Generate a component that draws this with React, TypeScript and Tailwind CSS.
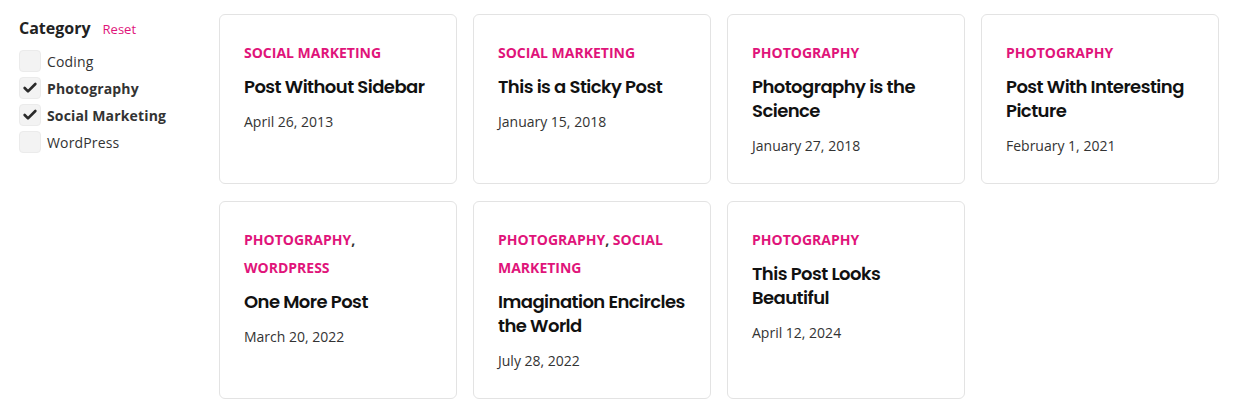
import { Check } from 'lucide-react';

interface Post {
  cats: string[];
  title: string;
  date: string;
}

const CATEGORIES = [
  { name: 'Coding', checked: false },
  { name: 'Photography', checked: true },
  { name: 'Social Marketing', checked: true },
  { name: 'WordPress', checked: false },
];

const POSTS: Post[] = [
  { cats: ['Social Marketing'], title: 'Post Without Sidebar', date: 'April 26, 2013' },
  { cats: ['Social Marketing'], title: 'This is a Sticky Post', date: 'January 15, 2018' },
  { cats: ['Photography'], title: 'Photography is the Science', date: 'January 27, 2018' },
  { cats: ['Photography'], title: 'Post With Interesting Picture', date: 'February 1, 2021' },
  { cats: ['Photography', 'WordPress'], title: 'One More Post', date: 'March 20, 2022' },
  { cats: ['Photography', 'Social Marketing'], title: 'Imagination Encircles the World', date: 'July 28, 2022' },
  { cats: ['Photography'], title: 'This Post Looks Beautiful', date: 'April 12, 2024' },
];

function PostCard({ post }: { post: Post }) {
  return (
    <div className="border border-[#e3e3e3] rounded-md px-6 pt-6 pb-[26px] bg-white">
      <p className="text-[14px] leading-[28px] font-bold uppercase text-[#e0147a]">
        {post.cats.map((c, i) => (
          <span key={c}>
            {i > 0 && <span className="text-[#333]">,</span>}
            {i > 0 && ' '}
            {c}
          </span>
        ))}
      </p>
      <h3 className="mt-2 text-[18px] leading-[24px] font-semibold text-[#111] font-['Poppins','Inter',sans-serif] tracking-[-0.55px]">
        {post.title}
      </h3>
      <div className="mt-3 text-[14px] leading-[22px] text-[#333]">{post.date}</div>
    </div>
  );
}

export default function App() {
  return (
    <div className="bg-white min-h-[416px] font-['Open_Sans',sans-serif] flex pl-[19px] pr-4 pt-[14px]">
      {/* Sidebar */}
      <aside className="w-[200px] shrink-0">
        <div className="flex items-baseline gap-3 pt-[2px]">
          <h2 className="text-[16px] leading-[24px] font-bold text-[#222]">Category</h2>
          <button className="text-[13px] text-[#e0147a]">Reset</button>
        </div>
        <ul className="mt-[10px] flex flex-col gap-[5px]">
          {CATEGORIES.map(c => (
            <li key={c.name} className="flex items-center gap-[6px] h-[22px]">
              <span className="w-[22px] h-[22px] rounded-[4px] bg-[#f3f3f3] border border-[#ebebeb] flex items-center justify-center">
                {c.checked && <Check size={16} strokeWidth={4} className="text-[#2a2a2a]" />}
              </span>
              <span className={`text-[14px] text-[#333] tracking-[0.15px] ${c.checked ? 'font-bold' : ''}`}>{c.name}</span>
            </li>
          ))}
        </ul>
      </aside>

      {/* Posts */}
      <main className="grid grid-cols-[repeat(4,238px)] gap-x-4 gap-y-[17px] content-start">
        {POSTS.map(p => (
          <PostCard key={p.title} post={p} />
        ))}
      </main>
    </div>
  );
}
